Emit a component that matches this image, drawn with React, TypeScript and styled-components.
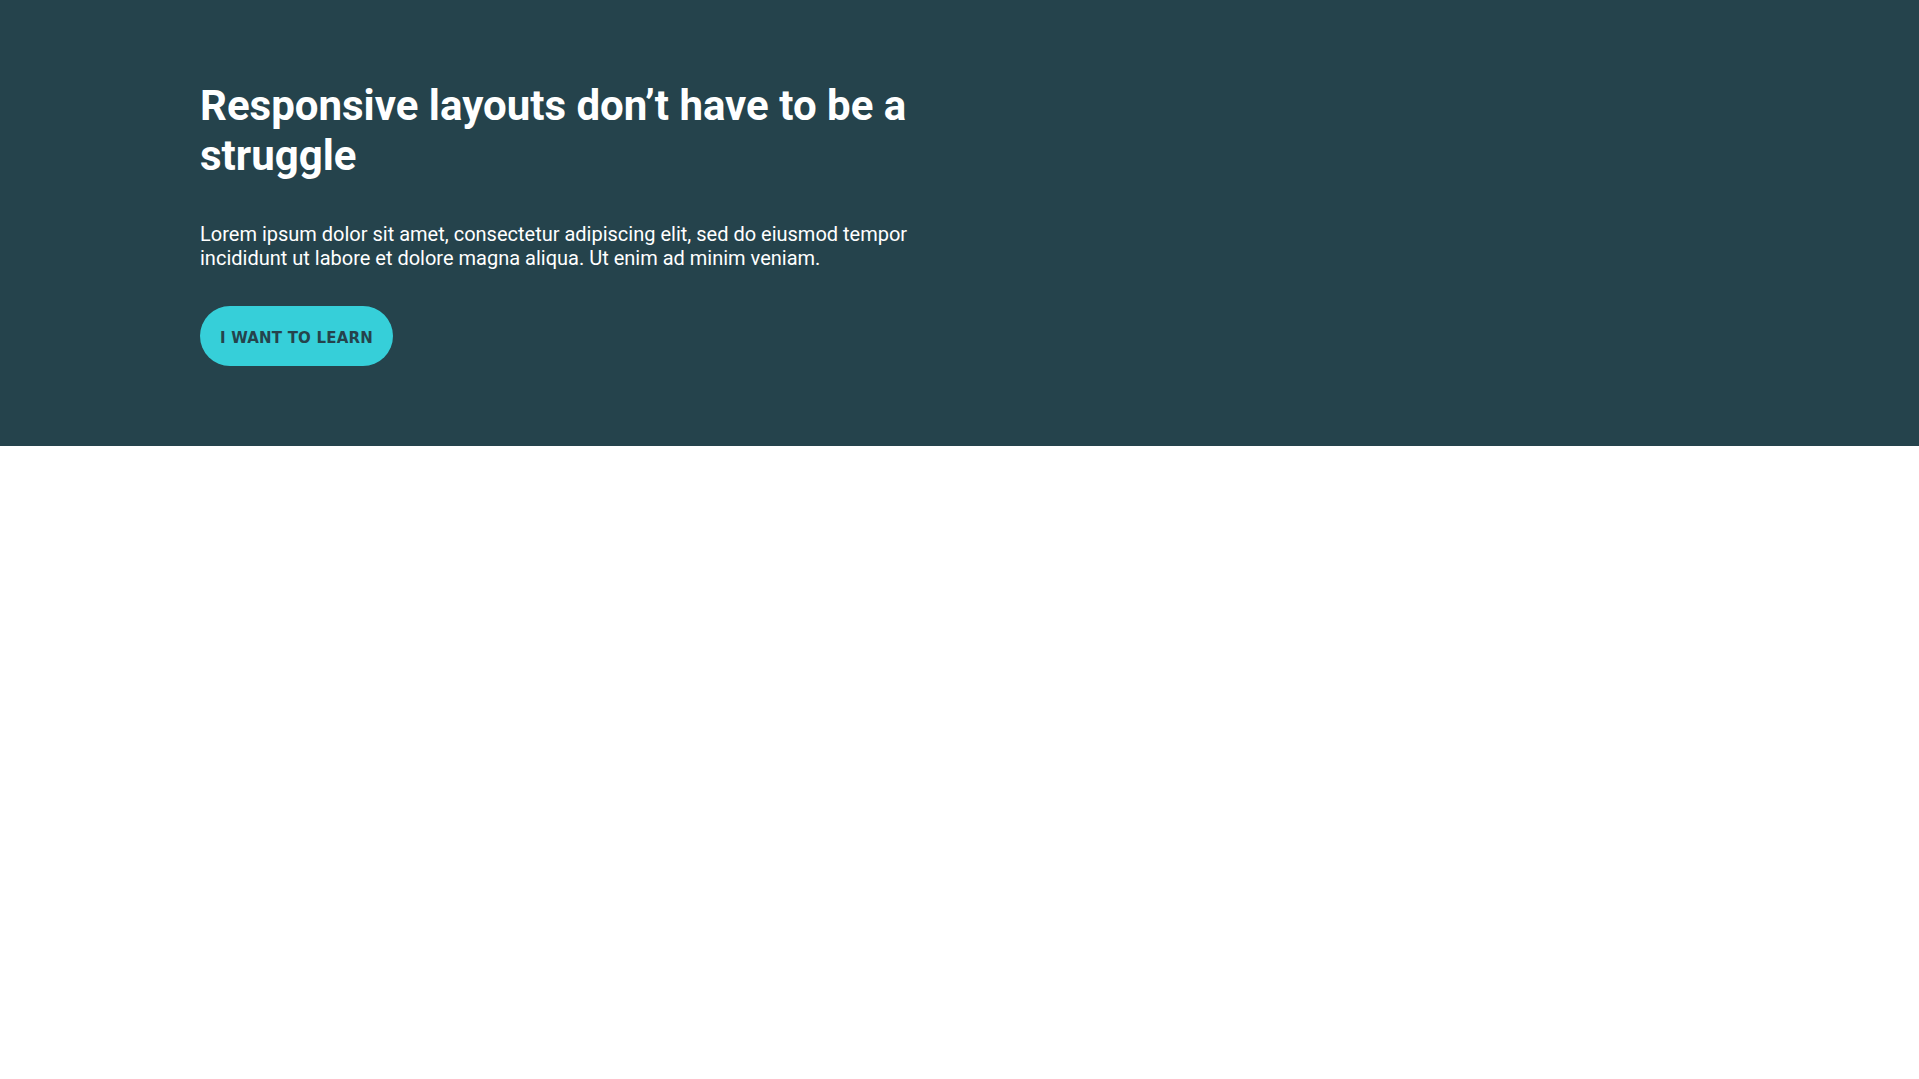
import React from "react";
import styled, { createGlobalStyle } from "styled-components";

const GlobalStyle = createGlobalStyle`
  html, body { margin: 0; padding: 0; background: #ffffff; }
  body { font-family: Roboto, "Liberation Sans", sans-serif; }
  * { box-sizing: border-box; }
`;

const Hero = styled.header`
  background: #25434c;
  color: #ffffff;
  padding: 81px 200px 80px;
`;

const Grid = styled.div`
  display: grid;
  grid-template-columns: 1fr 1fr;
  column-gap: 0;
`;

const Content = styled.div`
  display: flex;
  flex-direction: column;
  align-items: flex-start;
`;

const Title = styled.h1`
  margin: 0;
  font-family: Roboto, "Liberation Sans", sans-serif;
  font-weight: 700;
  font-size: 42px;
  line-height: 1.2;
`;

const Lead = styled.p`
  margin: 40px 0 0;
  font-family: Roboto, "Liberation Sans", sans-serif;
  font-weight: 400;
  font-size: 20px;
  line-height: normal;
`;

const CTA = styled.button`
  display: block;
  margin-top: 36px;
  height: 60px;
  padding: 4px 20px 0;
  border: none;
  border-radius: 30px;
  background: #36cfd9;
  color: #25434c;
  font-family: "DejaVu Sans", Verdana, sans-serif;
  font-weight: 700;
  font-size: 15px;
  letter-spacing: 0.2px;
  text-transform: uppercase;
  cursor: pointer;
`;

export default function App() {
  return (
    <>
      <GlobalStyle />
      <Hero>
        <Grid>
          <Content>
            <Title>Responsive layouts don’t have to be a struggle</Title>
            <Lead>
              Lorem ipsum dolor sit amet, consectetur adipiscing elit, sed do eiusmod tempor
              incididunt ut labore et dolore magna aliqua. Ut enim ad minim veniam.
            </Lead>
            <CTA>I want to learn</CTA>
          </Content>
          <div />
        </Grid>
      </Hero>
    </>
  );
}
